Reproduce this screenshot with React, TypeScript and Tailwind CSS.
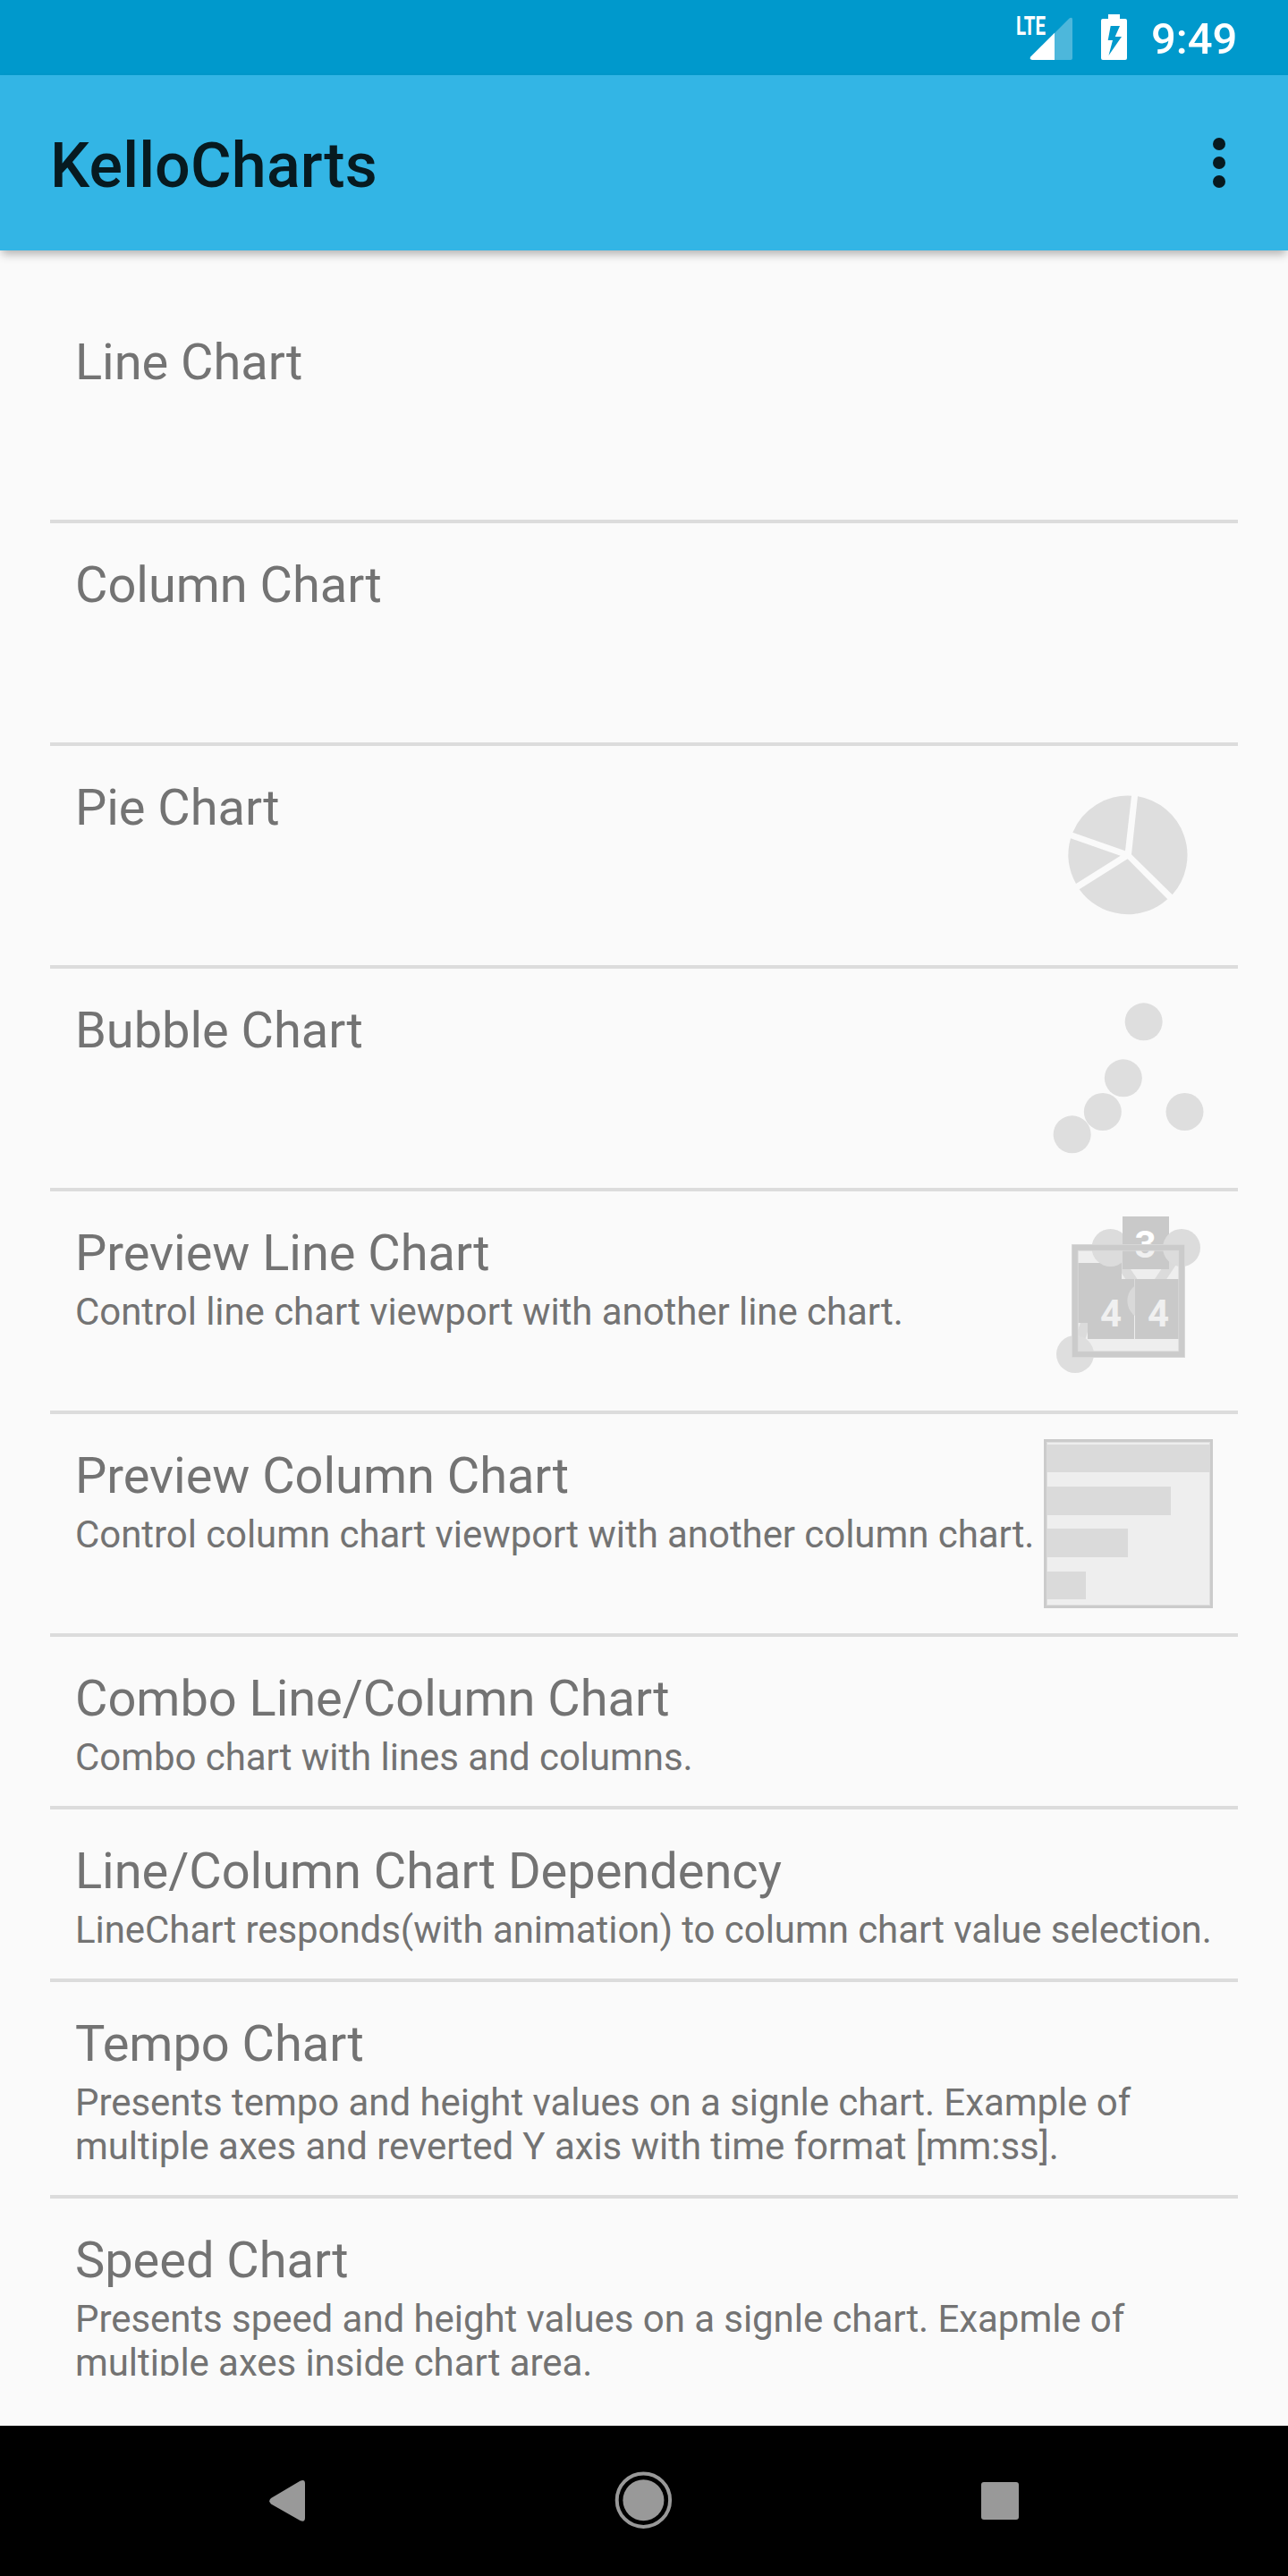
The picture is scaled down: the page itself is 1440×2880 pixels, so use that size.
import type { ReactNode } from "react";

const ROBOTO = "font-[Roboto,sans-serif]";

function SignalIcon() {
  return (
    <svg className="h-[60px] w-[66px] overflow-visible" viewBox="0 0 66 60" aria-label="LTE signal">
      <path d="M42 21 58.500 4.500Q62 2.500 62 6V49Q62 51 60 51H42Z" fill="#fff" fillOpacity="0.3" />
      <path d="M42 20.700V51H17Q13.500 50.500 15.200 47.500Z" fill="#fff" />
      <text x="-1" y="23.300" textLength="33" lengthAdjust="spacingAndGlyphs" fill="#fff" fontFamily="Roboto, sans-serif" fontWeight="700" fontSize="30">LTE</text>
    </svg>
  );
}

function BatteryIcon() {
  return (
    <svg className="h-[51px] w-[29px]" viewBox="0 0 29 51">
      <path fill="#fff" fillRule="evenodd" d="M8 0H21V5H27Q29 5 29 7V49Q29 51 27 51H2Q0 51 0 49V7Q0 5 2 5H8ZM10.700 13 7.700 29H13L8.500 46 23 25H15.700L21 13Z" />
    </svg>
  );
}

function PieIcon() {
  return (
    <svg className="size-[189px] shrink-0" viewBox="21 6 567 567" fill="#dedede">
      <path d="M336 91A200 200 0 0 1 452 421L315 286Z" />
      <path d="M436 436A200 200 0 0 1 140 403L302 301Z" />
      <path d="M129 384A200 200 0 0 1 111 232L278 290Z" />
      <path d="M118 212A200 200 0 0 1 315 89L294 274Z" />
    </svg>
  );
}

function BubbleIcon() {
  return (
    <svg className="size-[189px] shrink-0" viewBox="21 33 567 567" fill="#dedede">
      <circle cx="356" cy="127" r="63" />
      <circle cx="287.500" cy="316" r="63" />
      <circle cx="218.500" cy="429" r="63" />
      <circle cx="116" cy="505" r="63" />
      <circle cx="493.500" cy="429" r="63" />
    </svg>
  );
}

function PreviewLineIcon() {
  return (
    <svg className="size-[189px] shrink-0" viewBox="81 90 567 567">
      <defs>
        <linearGradient id="label-fill" gradientUnits="userSpaceOnUse" x1="0" y1="194" x2="0" y2="196">
          <stop offset="0" stopColor="#fff" />
          <stop offset="1" stopColor="#f0f0f0" />
        </linearGradient>
      </defs>
      <rect x="185" y="194" width="359" height="359" fill="#eee" />
      <path d="M186 552 304 195 424 373 543 195" fill="none" stroke="#dbdbdb" strokeWidth="33" />
      <path d="M195 246H342V447H195Z" fill="#c9c9c9" />
      <circle cx="186" cy="552" r="63" fill="#dedede" />
      <circle cx="304.500" cy="195" r="63" fill="#dcdcdc" />
      <path d="M228 300H384V501H228Z" fill="#c9c9c9" />
      <circle cx="424" cy="373" r="63" fill="#d9d9d9" />
      <path d="M384 422H387V501H384Z" fill="#eee" />
      <path d="M387 300H543V501H387ZM345 90H501V267H345Z" fill="#c9c9c9" />
      <circle cx="543" cy="195" r="63" fill="#dcdcdc" />
      <g fontFamily="Roboto, sans-serif" fontWeight="700" fontSize="126" textAnchor="middle">
        <text x="422" y="229" fill="url(#label-fill)">3</text>
        <text x="306" y="459" fill="#f0f0f0">4</text>
        <text x="465" y="459" fill="#f0f0f0">4</text>
      </g>
      <rect x="185.500" y="194.500" width="358" height="358" fill="none" stroke="#dadada" strokeWidth="23" />
      <rect x="185.500" y="194.500" width="358" height="358" fill="none" stroke="#cbcbcb" strokeWidth="18" />
    </svg>
  );
}

function PreviewColumnIcon() {
  return (
    <svg className="size-[189px] shrink-0" viewBox="81 87 567 567">
      <rect x="81" y="87" width="567" height="567" fill="#cbcbcb" />
      <rect x="90" y="96" width="549" height="549" fill="#dedede" />
      <rect x="93" y="99" width="543" height="543" fill="#eee" />
      <path d="M90 105H639V198H90ZM90 246H507V342H90ZM90 387H363V483H90ZM90 531H222V624H90Z" fill="#dadada" />
    </svg>
  );
}

type Sample = { title: string; lines?: string[]; icon?: ReactNode; tall?: boolean };

const samples: Sample[] = [
  { title: "Line Chart", tall: true },
  { title: "Column Chart", tall: true },
  { title: "Pie Chart", tall: true, icon: <PieIcon /> },
  { title: "Bubble Chart", tall: true, icon: <BubbleIcon /> },
  { title: "Preview Line Chart", tall: true, icon: <PreviewLineIcon />, lines: ["Control line chart viewport with another line chart."] },
  { title: "Preview Column Chart", tall: true, icon: <PreviewColumnIcon />, lines: ["Control column chart viewport with another column chart."] },
  { title: "Combo Line/Column Chart", lines: ["Combo chart with lines and columns."] },
  { title: "Line/Column Chart Dependency", lines: ["LineChart responds(with animation) to column chart value selection."] },
  { title: "Tempo Chart", lines: ["Presents tempo and height values on a signle chart. Example of", "multiple axes and reverted Y axis with time format [mm:ss]."] },
  { title: "Speed Chart", lines: ["Presents speed and height values on a signle chart. Exapmle of", "multiple axes inside chart area."] },
];

function Row({ title, lines, icon, tall }: Sample) {
  return (
    <li className={`box-content flex justify-between border-b-4 border-[#dcdcdc] px-7 last:border-b-0 ${tall ? "h-[245px]" : ""}`}>
      <div className="w-0 grow whitespace-nowrap pt-9 pb-[30px]">
        <h2 className="text-[56px] leading-[66px] tracking-[-0.04px]">{title}</h2>
        {lines && (
          <p className="mt-2 text-[42px] leading-[49px] tracking-[-0.06px]">
            {lines.map((line) => (
              <span key={line} className="block">{line}</span>
            ))}
          </p>
        )}
      </div>
      {icon && <div className="pt-7">{icon}</div>}
    </li>
  );
}

export default function App() {
  return (
    <div className={`flex h-[2880px] w-[1440px] flex-col overflow-hidden bg-[#fafafa] ${ROBOTO}`}>
      <div className="z-10 flex h-[84px] shrink-0 items-start justify-end bg-[#0099cc] pr-14 text-white">
        <div className="mt-4 mr-7"><SignalIcon /></div>
        <div className="mt-4 mr-[27px]"><BatteryIcon /></div>
        <span className="mt-[15px] w-[97px] text-[49px] leading-[58px] font-medium whitespace-nowrap">9:49</span>
      </div>
      <header className="z-10 flex h-[196px] shrink-0 items-center justify-between bg-[#33b5e5] pr-[70px] pl-14 text-[#071a20] shadow-[0_6px_10px_-2px_rgba(0,0,0,0.3)]">
        <h1 className="mt-1.5 text-[70px] leading-[82px] font-medium tracking-[0.15px]">KelloCharts</h1>
        <div className="flex flex-col gap-[7px]">
          <i className="size-3.5 rounded-full bg-current" />
          <i className="size-3.5 rounded-full bg-current" />
          <i className="size-3.5 rounded-full bg-current" />
        </div>
      </header>
      <main className="h-[2432px] shrink-0 p-14">
        <ul className="h-full overflow-hidden text-[#737373]">
          {samples.map((sample) => (
            <Row key={sample.title} {...sample} />
          ))}
        </ul>
      </main>
      <nav className="h-[168px] shrink-0 bg-black">
        <svg className="h-full w-full" viewBox="0 0 1440 168" fill="#999">
          <path d="M335.500 61.800Q341 59.500 341 64.500V103Q341 108.500 335.500 106L303 87.500Q299.500 84.300 303 81Z" />
          <circle cx="719.400" cy="83.200" r="29.700" fill="none" stroke="#999" strokeWidth="4" />
          <circle cx="719.400" cy="83.300" r="23" />
          <rect x="1097" y="63" width="42" height="42" rx="3" />
        </svg>
      </nav>
    </div>
  );
}
